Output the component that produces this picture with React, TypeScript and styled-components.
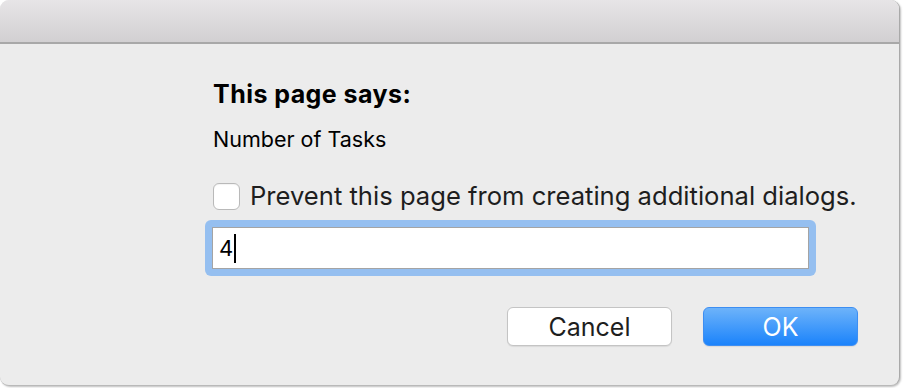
import React from "react";
import styled, { createGlobalStyle } from "styled-components";

const Global = createGlobalStyle`
  html, body { margin: 0; padding: 0; background: #ffffff; }
  body { font-family: "Inter", "Liberation Sans", sans-serif; -webkit-font-smoothing: antialiased; }
`;

const Page = styled.div`
  width: 906px;
  height: 388px;
  overflow: hidden;
  position: relative;
`;

const Dialog = styled.div`
  width: 900px;
  height: 386px;
  box-sizing: border-box;
  display: flex;
  flex-direction: column;
  background: #ececec;
  border-radius: 9px;
  border-right: 1px solid #a9a9a9;
  border-bottom: 1px solid #b9b9b9;
  box-shadow: 1px 1px 2px rgba(0, 0, 0, 0.25);
  overflow: hidden;
`;

const TitleBar = styled.div`
  height: 42px;
  flex: none;
  background: linear-gradient(#e7e5e7, #d2d0d2);
  border-bottom: 2px solid #a8a8a8;
`;

const Body = styled.div`
  flex: 1;
  display: flex;
  flex-direction: column;
  padding: 35px 0 0 213px;
`;

const Heading = styled.div`
  font-size: 25px;
  font-weight: 700;
  line-height: 30px;
  color: #000;
  letter-spacing: 0.45px;
`;

const Message = styled.div`
  margin-top: 17px;
  font-size: 21.5px;
  line-height: 26px;
  color: #000;
`;

const CheckRow = styled.label`
  margin-top: 29px;
  display: flex;
  align-items: center;
  gap: 10px;
  font-size: 25.6px;
  line-height: 30px;
  color: #1e1e1e;
`;

const Box = styled.span`
  width: 27px;
  height: 27px;
  box-sizing: border-box;
  border-radius: 6px;
  background: #ffffff;
  border: 1px solid #b9b9b9;
  box-shadow: inset 0 1px 1px rgba(0, 0, 0, 0.05);
  flex: none;
`;

const Field = styled.div`
  margin-top: 9px;
  margin-left: -8px;
  width: 611px;
  height: 56px;
  box-sizing: border-box;
  padding: 7px;
  border-radius: 6px;
  background: #95bff0;
`;

const FieldInner = styled.div`
  height: 100%;
  box-sizing: border-box;
  background: #ffffff;
  border: 1px solid #a4a4a4;
  display: flex;
  align-items: center;
  padding-left: 6px;
  font-size: 22px;
  color: #000;
`;

const Caret = styled.span`
  display: inline-block;
  width: 2px;
  height: 29px;
  margin-left: 1px;
  background: #000;
`;

const Buttons = styled.div`
  margin-top: 31px;
  display: flex;
  gap: 31px;
  padding-left: 294px;
`;

const Button = styled.button<{ $primary?: boolean }>`
  width: 155px;
  height: 39px;
  box-sizing: border-box;
  border-radius: 6px;
  font-family: "Inter", "Liberation Sans", sans-serif;
  font-size: 25px;
  padding: 0;
  cursor: default;
  color: ${(p) => (p.$primary ? "#ffffff" : "#1e1e1e")};
  background: ${(p) =>
    p.$primary ? "linear-gradient(#6db3fa, #1b83fb)" : "#ffffff"};
  border: 1px solid ${(p) => (p.$primary ? "#3d8ef2" : "#c4c4c4")};
  box-shadow: 0 1px 1px rgba(0, 0, 0, 0.08);
`;

const CancelButton = styled(Button)`
  width: 165px;
`;

export default function App() {
  return (
    <Page>
      <Global />
      <Dialog>
        <TitleBar />
        <Body>
          <Heading>This page says:</Heading>
          <Message>Number of Tasks</Message>
          <CheckRow>
            <Box />
            Prevent this page from creating additional dialogs.
          </CheckRow>
          <Field>
            <FieldInner>
              4<Caret />
            </FieldInner>
          </Field>
          <Buttons>
            <CancelButton>Cancel</CancelButton>
            <Button $primary>OK</Button>
          </Buttons>
        </Body>
      </Dialog>
    </Page>
  );
}
